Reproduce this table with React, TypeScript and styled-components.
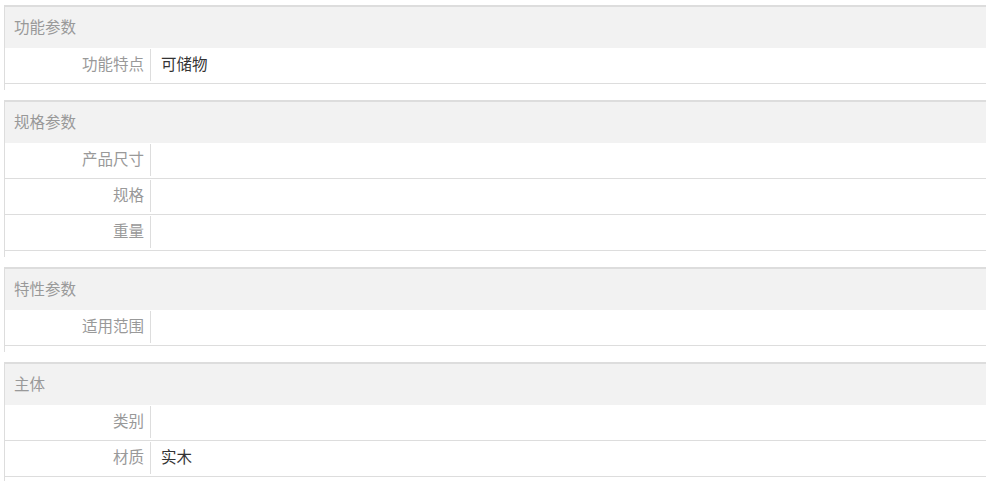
import React from 'react'
import styled, { createGlobalStyle } from 'styled-components'

const GlobalStyle = createGlobalStyle`
  body {
    margin: 0;
    background: #fff;
    font-family: "Noto Sans CJK SC", "Noto Sans", sans-serif;
  }
`

const Page = styled.div`
  padding: 5px 4px 0 4px;
`

const Group = styled.section`
  border-top: 2px solid #ddd;
  border-left: 1px solid #ddd;
  padding-bottom: 6px;
  margin-bottom: 10px;
`

const GroupHead = styled.div`
  height: 41px;
  box-sizing: border-box;
  padding: 0 0 2px 9px;
  background: #f2f2f2;
  display: flex;
  align-items: center;
  font-size: 15.5px;
  line-height: 1;
  color: #999;
`

const Row = styled.div`
  display: flex;
  height: 35px;
  border-bottom: 1px solid #ddd;
  align-items: stretch;
`

const Label = styled.div`
  width: 146px;
  margin: 1px 0 2px;
  border-right: 1px solid #ddd;
  box-sizing: border-box;
  display: flex;
  align-items: center;
  justify-content: flex-end;
  padding: 0 6px 3px 0;
  font-size: 15.5px;
  line-height: 1;
  color: #999;
`

const Value = styled.div`
  flex: 1;
  display: flex;
  align-items: center;
  padding: 0 0 3px 10px;
  font-size: 15.5px;
  line-height: 1;
  color: #333;
`

interface Param {
  label: string
  value?: string
}

interface ParamGroup {
  title: string
  items: Param[]
}

const groups: ParamGroup[] = [
  { title: '功能参数', items: [{ label: '功能特点', value: '可储物' }] },
  {
    title: '规格参数',
    items: [{ label: '产品尺寸' }, { label: '规格' }, { label: '重量' }],
  },
  { title: '特性参数', items: [{ label: '适用范围' }] },
  {
    title: '主体',
    items: [{ label: '类别' }, { label: '材质', value: '实木' }],
  },
]

export default function App() {
  return (
    <Page>
      <GlobalStyle />
      {groups.map((g) => (
        <Group key={g.title}>
          <GroupHead>{g.title}</GroupHead>
          {g.items.map((p) => (
            <Row key={p.label}>
              <Label>{p.label}</Label>
              <Value>{p.value}</Value>
            </Row>
          ))}
        </Group>
      ))}
    </Page>
  )
}
